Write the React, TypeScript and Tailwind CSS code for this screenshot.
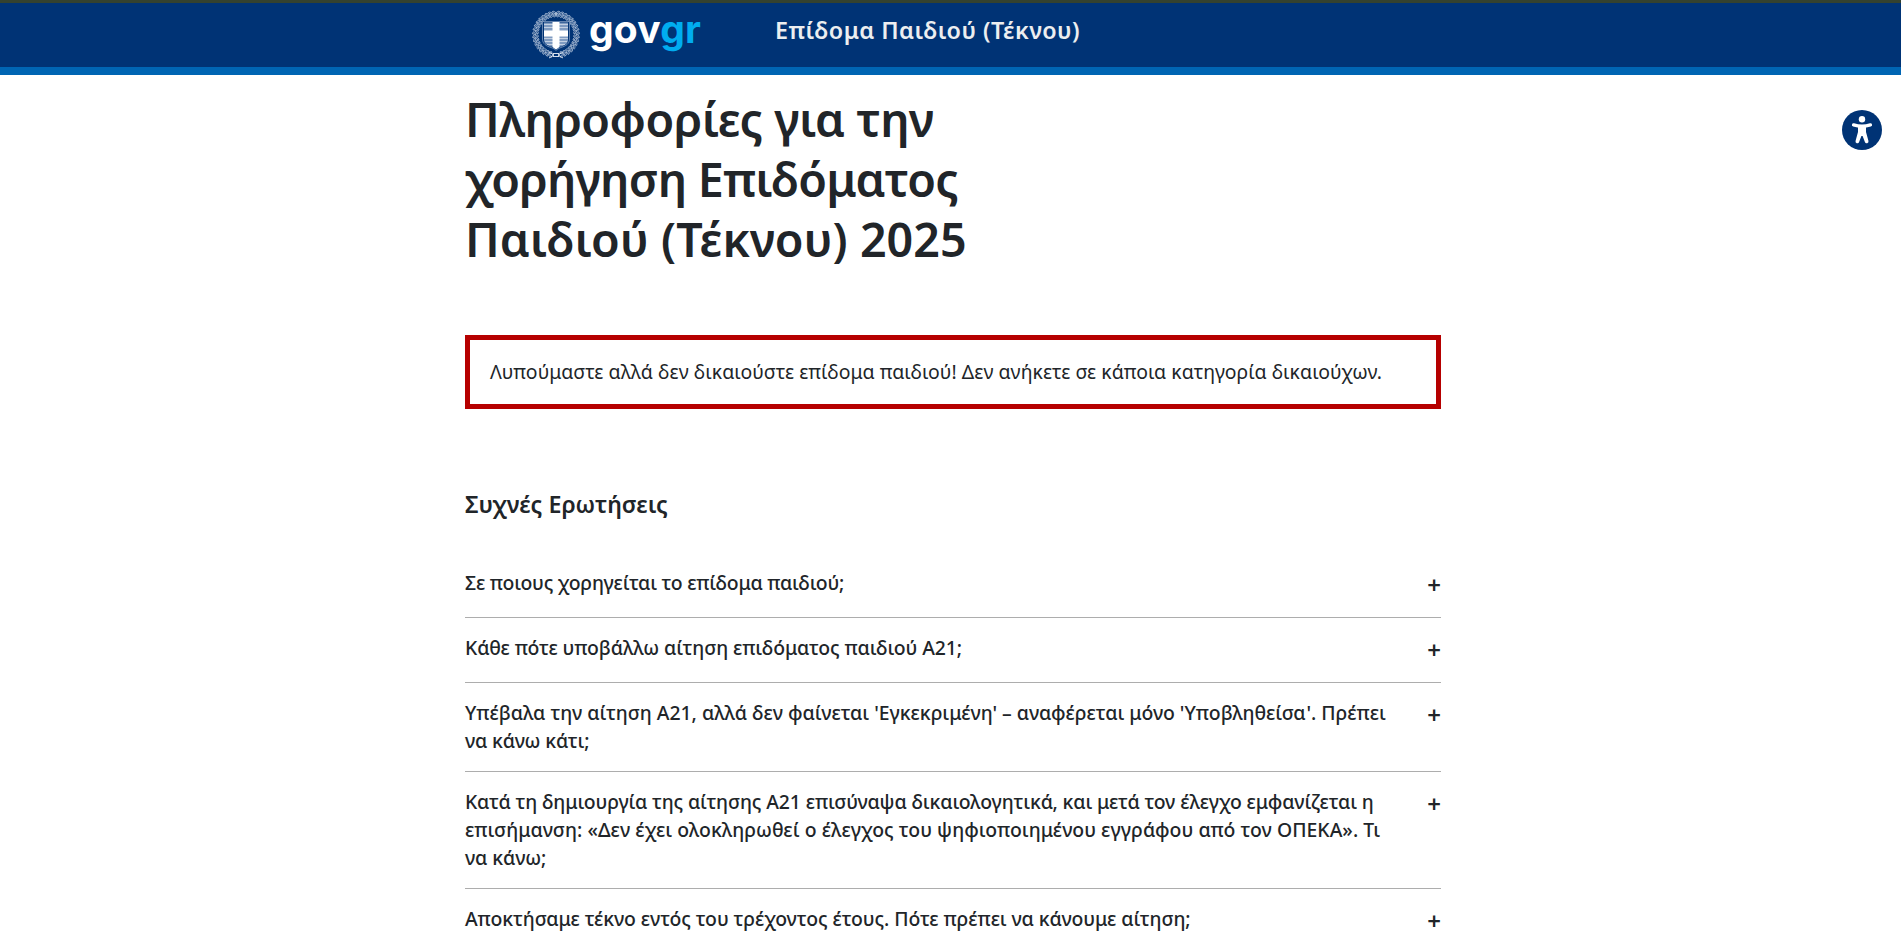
type Line = { text: string; spacing: string };

const questions: Line[][] = [
  [{ text: "Σε ποιους χορηγείται το επίδομα παιδιού;", spacing: "tracking-[-0.22px]" }],
  [{ text: "Κάθε πότε υποβάλλω αίτηση επιδόματος παιδιού Α21;", spacing: "tracking-[-0.09px]" }],
  [
    {
      text: "Υπέβαλα την αίτηση Α21, αλλά δεν φαίνεται 'Εγκεκριμένη' – αναφέρεται μόνο 'Υποβληθείσα'. Πρέπει",
      spacing: "tracking-[-0.025px]",
    },
    { text: "να κάνω κάτι;", spacing: "tracking-[-0.15px]" },
  ],
  [
    {
      text: "Κατά τη δημιουργία της αίτησης Α21 επισύναψα δικαιολογητικά, και μετά τον έλεγχο εμφανίζεται η",
      spacing: "tracking-[-0.12px]",
    },
    {
      text: "επισήμανση: «Δεν έχει ολοκληρωθεί ο έλεγχος του ψηφιοποιημένου εγγράφου από τον ΟΠΕΚΑ». Τι",
      spacing: "tracking-[0.04px]",
    },
    { text: "να κάνω;", spacing: "tracking-[-0.05px]" },
  ],
  [
    {
      text: "Αποκτήσαμε τέκνο εντός του τρέχοντος έτους. Πότε πρέπει να κάνουμε αίτηση;",
      spacing: "tracking-[-0.08px]",
    },
  ],
];

const leaves = Array.from({ length: 17 }, (_, i) => 14 + i * 10);

function Emblem() {
  return (
    <svg className="h-[50px] w-[50px] shrink-0" viewBox="0 0 50 50" fill="none">
      {[1, -1].map((side) => (
        <g key={side} transform={side === 1 ? undefined : "translate(50 0) scale(-1 1)"}>
          {leaves.map((angle) => (
            <g key={angle} transform={`rotate(${angle} 25 24.5) translate(25 45.5)`} stroke="#b9c8dd" strokeWidth="0.75">
              <ellipse cx="0" cy="1.2" rx="2.2" ry="0.8" transform="rotate(35)" />
              <ellipse cx="0" cy="-2.3" rx="2.1" ry="0.8" transform="rotate(-35)" />
            </g>
          ))}
        </g>
      ))}
      <path d="M18 42l5 3-5 3M32 42l-5 3 5 3M22 43.5h6v3h-6z" stroke="#d5deeb" strokeWidth="1" />
      <path
        d="M11.500 11.500h27v17.500c0 5-4 7-8.500 8.500-2.500 1-4 1.500-5 3-1-1.500-2.500-2-5-3-4.500-1.500-8.500-3.500-8.500-8.500z"
        fill="#003375"
        stroke="#8ea6c8"
        strokeWidth="0.7"
      />
      <path d="M13 12.500h24V30c0 3.500-3 5-6.500 6.500h-11C16 35 13 33.500 13 30z" fill="#7f9bc1" />
      <path d="M13 14.500h24M13 17.500h24M13 28.500h24M14 31.500h22M16 34.500h18" stroke="#c3d0e2" strokeWidth="1.100" />
      <path d="M21.500 12h7v8.500H37v6h-8.500V37L25 39.500 21.500 37V26.500H13v-6h8.500z" fill="#fff" />
    </svg>
  );
}

function AccessibilityIcon() {
  return (
    <svg className="h-10 w-10" viewBox="0 0 40 40">
      <circle cx="20" cy="20" r="20" fill="#003375" />
      <circle cx="20" cy="9.300" r="3.200" fill="#fff" />
      <path
        d="M11.600 14.900 Q20 17.400 28.400 14.900"
        fill="none"
        stroke="#fff"
        strokeWidth="3.400"
        strokeLinecap="round"
      />
      <path
        d="M16 15.500h8v6.500l2.400 8.800a1.850 1.850 0 0 1-3.500 1.200L20.600 26h-1.200l-2.300 6a1.850 1.850 0 0 1-3.500-1.200L16 22z"
        fill="#fff"
      />
    </svg>
  );
}

export default function App() {
  return (
    <div className="h-[938px] w-full overflow-hidden bg-white font-['Noto_Sans',sans-serif] text-[#212529]">
      <header className="h-[75px] border-t-3 border-b-8 border-t-[#34422f] border-b-[#0065b3] bg-[#003375]">
        <div className="flex items-start pl-[531px]">
          <div className="mt-[7px]">
            <Emblem />
          </div>
          <div className="ml-2 w-[186px] font-['Inter',sans-serif] text-[39px] leading-[52px] font-bold tracking-[0.2px] text-white">
            gov<span className="text-[#00adf0]">gr</span>
          </div>
          <div className="mt-[11px] text-[23.3px] leading-8 font-semibold tracking-[0.49px] whitespace-nowrap text-[#eceef0]">
            Επίδομα Παιδιού (Τέκνου)
          </div>
        </div>
      </header>
      <div className="flex items-start pl-[465px]">
        <main className="w-[976px] shrink-0 pt-[14px]">
          <h1 className="flex flex-col text-[46.6px] leading-[60px] font-semibold whitespace-nowrap">
            <span className="tracking-[-0.5px]">Πληροφορίες για την</span>
            <span className="tracking-[-0.75px]">χορήγηση Επιδόματος</span>
            <span className="tracking-[0.04px]">Παιδιού (Τέκνου) 2025</span>
          </h1>
          <div className="mt-[66px] h-[74px] border-5 border-[#b60000] pt-[18px] pl-5">
            <p className="text-[19.4px] leading-7 tracking-[0.054px] whitespace-nowrap">
              Λυπούμαστε αλλά δεν δικαιούστε επίδομα παιδιού! Δεν ανήκετε σε κάποια κατηγορία δικαιούχων.
            </p>
          </div>
          <h2 className="mt-[79px] text-[23.3px] leading-8 font-semibold">Συχνές Ερωτήσεις</h2>
          <ul className="mt-[33px]">
            {questions.map((lines, i) => (
              <li key={i} className="flex items-start justify-between border-b border-[#adadad] py-4">
                <div className="text-[19.4px] leading-7 font-medium whitespace-nowrap">
                  {lines.map((line) => (
                    <div key={line.text} className={line.spacing}>
                      {line.text}
                    </div>
                  ))}
                </div>
                <span className="text-2xl leading-8 font-semibold">+</span>
              </li>
            ))}
          </ul>
        </main>
        <button className="mt-[35px] mr-[19px] ml-auto h-10 w-10" aria-label="Προσβασιμότητα">
          <AccessibilityIcon />
        </button>
      </div>
    </div>
  );
}
